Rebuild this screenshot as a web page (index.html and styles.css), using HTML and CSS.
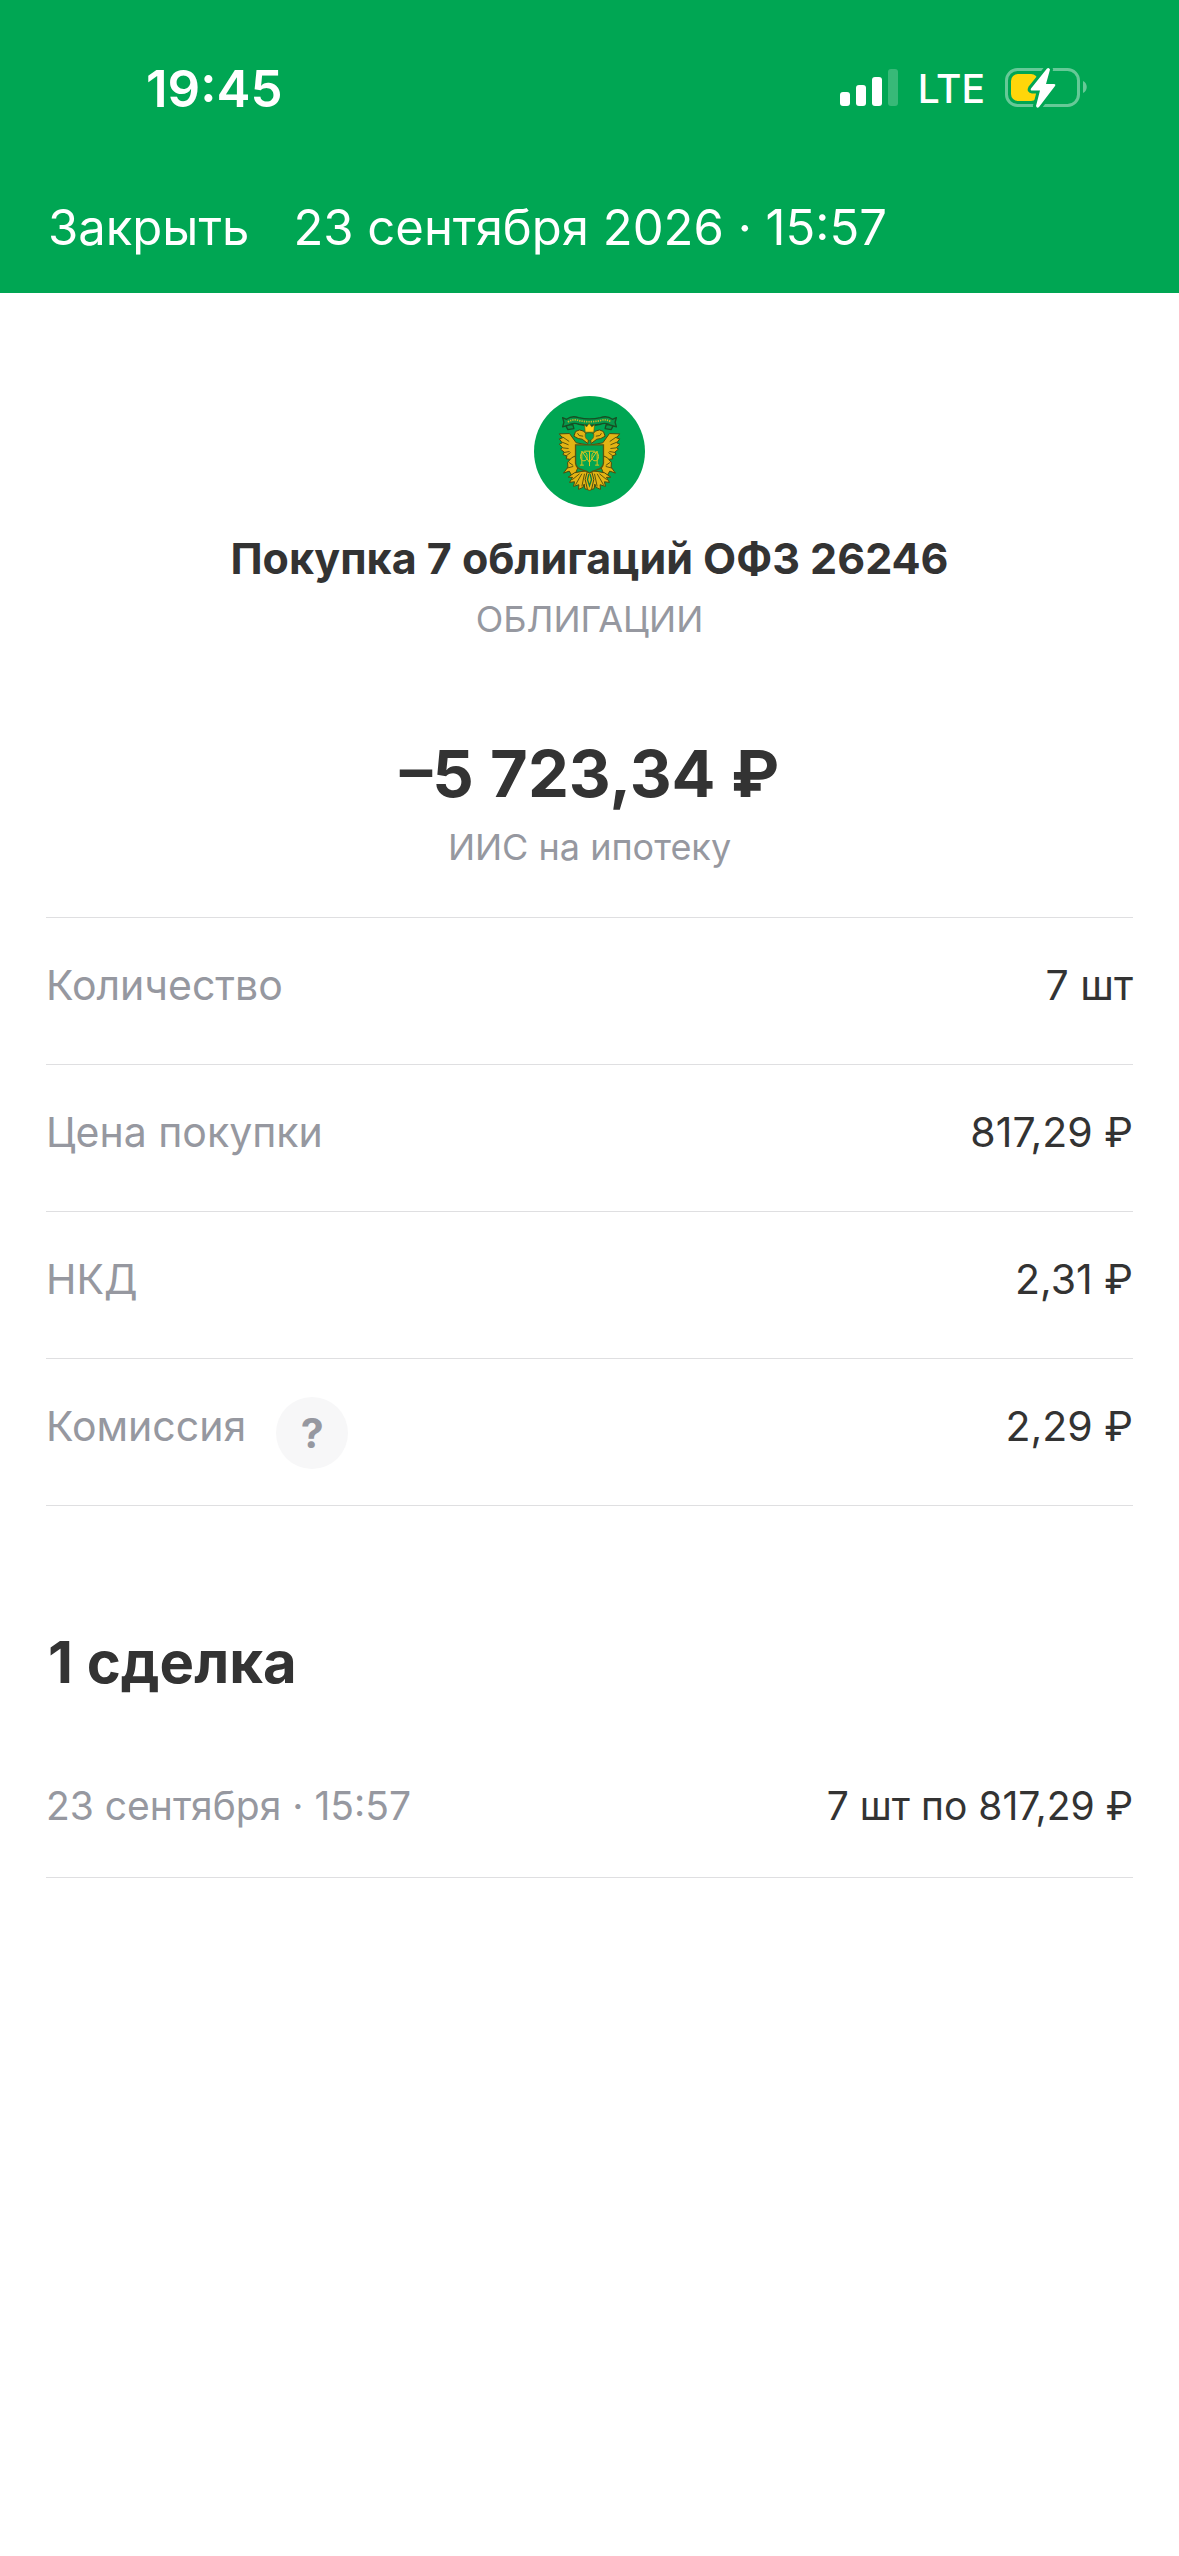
FILE: index.html
```html
<!DOCTYPE html>
<html lang="ru">
<head>
    <meta charset="UTF-8">
    <meta name="viewport" content="width=device-width, initial-scale=1.0">
    <title>Покупка облигаций</title>
    <link rel="stylesheet" href="styles.css">
</head>
<body>

    <header class="header">
        <!-- Status bar -->
        <div class="status">
            <span class="time">19:45</span>
            <div class="indicators">
                <svg class="signal" viewBox="0 0 58 38" aria-hidden="true">
                    <rect x="0" y="23" width="10" height="14" rx="3"/>
                    <rect x="16" y="16" width="10" height="21" rx="3"/>
                    <rect x="32" y="8" width="10" height="29" rx="3"/>
                    <rect x="48" y="0" width="10" height="37" rx="3" opacity="0.22"/>
                </svg>
                <span class="network">LTE</span>
                <svg class="battery" viewBox="0 0 82 42" aria-hidden="true">
                    <rect x="1.5" y="2.5" width="72" height="36" rx="11" fill="none" stroke="#fff" stroke-width="3" opacity="0.4"/>
                    <path d="M78 14c5 2 5 10 0 12z" fill="#fff" opacity="0.4"/>
                    <rect x="6" y="7" width="27" height="27" rx="7" fill="#ffd60a"/>
                    <path d="M42 1.500L26 21.500q-1 2 1 2h8l-4 15.500q1 3 3 1L50 19q1-2-1-2h-8l4-14.500q-1-2.500-3-1z" fill="#fff" stroke="#00a653" stroke-width="6"/>
                    <path d="M42 1.500L26 21.500q-1 2 1 2h8l-4 15.500q1 3 3 1L50 19q1-2-1-2h-8l4-14.500q-1-2.500-3-1z" fill="#fff"/>
                </svg>
            </div>
        </div>
        <!-- Navigation -->
        <nav class="nav">
            <button type="button" class="close">Закрыть</button>
            <span>23 сентября 2026 · 15:57</span>
        </nav>
    </header>

    <main class="content">
        <section class="summary">
            <svg class="emblem" viewBox="43 33 334 334" aria-hidden="true">
                <circle cx="210" cy="200" r="167" fill="#00a653"/>
                <!-- ribbon -->
                <g fill="#07964a" stroke="#174f24" stroke-width="4" stroke-linejoin="round">
                    <path d="M137 120l8 14 18-3-3-12zM283 120l-8 14-18-3 3-12z"/>
                    <path d="M129 98l12 5q16-12 36-5 33 8 66 0 20-7 36 5l12-5-4 14 4 14-17-5q-14-9-32-3-32 7-64 0-18-6-32 3l-17 5 4-14z"/>
                </g>
                <path d="M145 111q17-10 33-4 32 7 64 0 17-6 33 4" fill="none" stroke="#c5b928" stroke-width="5" stroke-dasharray="4 3"/>
                <!-- wings, tail and heads -->
                <g fill="#e3b414" stroke="#4b4a0e" stroke-width="3" stroke-linejoin="round">
                    <g id="half">
                        <path d="M205 180l-35-6-20-28-31 1 10 12-10 3 9 12-9 4 10 10-6 5 11 9-4 7 12 5-2 8 14 2 0 6 12-8 14-18 3-16 22-3z"/>
                        <path d="M205 176l-17-13-12-2-13-7 5-14 12-5 13 4 10 12 4 12z"/>
                        <path d="M166 214l-10 5-12 14 1 14-13 18 17-6 7 12 13-8 7-17-5-19z"/>
                        <path d="M207 258l-20 2-22 4-19 13 13 1-9 15 15-2-3 14 16-5-1 14 13-6 4-10 2 14 11 3z"/>
                    </g>
                    <use href="#half" transform="matrix(-1 0 0 1 420 0)"/>
                </g>
                <g fill="none" stroke="#5b550e" stroke-width="3">
                    <path id="feathers" d="M129 156l20 14M128 172l19 8M129 189l18 2M133 203l17-3M139 214l14-11M147 232l14 10M142 250l19-5M180 267l-22 18M187 267l-19 33M195 267l-8 38M174 145l5 7 12 2"/>
                    <use href="#feathers" transform="matrix(-1 0 0 1 420 0)"/>
                </g>
                <path d="M195 119l6 7 8-11 8 11 8-7-2 23h-26z" fill="#ffce18" stroke="#5b550e" stroke-width="2"/>
                <path d="M197 148q13-10 26 0 1 15-13 20-14-5-13-20z" fill="#00a653" stroke="#5b550e" stroke-width="2"/>
                <path d="M204 258h12l7 26-7 31q-6 4-12 0l-7-31z" fill="#e3b414" stroke="#4b4a0e" stroke-width="3"/>
                <path d="M208 268l-4 17 6 18 6-18-4-17" fill="none" stroke="#08813e" stroke-width="4"/>
                <!-- shield with monogram -->
                <path d="M168 180h84v55q-2 17-20 20-15 3-22 10-7-7-22-10-18-3-20-20z" fill="#00a653" stroke="#5b550e" stroke-width="4"/>
                <g fill="none" stroke="#e0c41b" stroke-width="3">
                    <path d="M187 241v-42l23 34 23-34v42M194 199h32M210 199v45M181 241h12M227 241h12"/>
                    <ellipse cx="193" cy="215" rx="10" ry="13"/>
                    <ellipse cx="227" cy="215" rx="10" ry="13"/>
                </g>
            </svg>
            <h1 class="title">Покупка 7 облигаций ОФЗ 26246</h1>
            <p class="note">ОБЛИГАЦИИ</p>
            <p class="amount">–5&#8197;723,34 ₽</p>
            <p class="note">ИИС на ипотеку</p>
        </section>

        <dl class="details">
            <div class="row">
                <dt>Количество</dt>
                <dd>7 шт</dd>
            </div>
            <div class="row">
                <dt>Цена покупки</dt>
                <dd>817,29 ₽</dd>
            </div>
            <div class="row">
                <dt>НКД</dt>
                <dd>2,31 ₽</dd>
            </div>
            <div class="row">
                <dt>Комиссия</dt>
                <dd class="help-cell"><button type="button" class="help">?</button></dd>
                <dd>2,29 ₽</dd>
            </div>
        </dl>

        <section>
            <h2 class="deals-title">1 сделка</h2>
            <div class="deal">
                <span class="deal-date">23 сентября · 15:57</span>
                <span>7 шт по 817,29 ₽</span>
            </div>
        </section>
    </main>

</body>
</html>
```
FILE: styles.css
```css
body {
    margin: 0;
    background-color: #fff;
    color: #333;
    font-family: Inter, "Noto Sans", sans-serif;
}
h1, h2, p, dl, dd {
    margin: 0;
}
button {
    border: none;
    padding: 0;
    font-family: inherit;
    cursor: pointer;
}

/* Header */
.header {
    background-color: #00a653;
    color: #fff;
    padding: 56px 48px 35px;
}
.status {
    display: flex;
    justify-content: space-between;
    align-items: center;
    height: 64px;
    padding: 0 44px 0 98px;
}
.time {
    font-size: 51px;
    font-weight: 600;
}
.indicators {
    display: flex;
    align-items: center;
    gap: 20px;
}
.signal {
    width: 58px;
    height: 38px;
    fill: #fff;
}
.network {
    font-size: 39px;
    font-weight: 500;
}
.battery {
    width: 82px;
    height: 42px;
}
.nav {
    display: flex;
    gap: 44px;
    margin-top: 78px;
    font-size: 49px;
    line-height: 60px;
    white-space: nowrap;
}
.close {
    background: none;
    color: #fff;
    font-size: 49px;
    line-height: 60px;
}

/* Summary */
.content {
    padding: 103px 46px 0;
}
.summary {
    display: flex;
    flex-direction: column;
    align-items: center;
    text-align: center;
    padding-bottom: 48px;
}
.emblem {
    width: 111px;
    height: 111px;
}
.title {
    margin-top: 26px;
    font-size: 43px;
    font-weight: 700;
    line-height: 50px;
}
.note {
    margin-top: 14px;
    color: #9698a0;
    font-size: 36px;
    line-height: 44px;
}
.amount {
    margin-top: 96px;
    font-size: 65px;
    font-weight: 700;
    line-height: 74px;
}

/* Details */
.row {
    display: flex;
    align-items: flex-start;
    box-sizing: border-box;
    min-height: 147px;
    padding: 38px 0 36px;
    border-top: 1px solid #dfdfe1;
    font-size: 41px;
    line-height: 58px;
}
.row:last-child {
    border-bottom: 1px solid #dfdfe1;
}
.row dt {
    color: #9698a0;
}
.row dd:last-child {
    margin-left: auto;
}
.help-cell {
    margin-left: 30px;
}
.help {
    display: block;
    width: 72px;
    height: 72px;
    border-radius: 50%;
    background-color: #f7f7f8;
    color: #9698a0;
    font-size: 41px;
    font-weight: 700;
}

/* Deals */
.deals-title {
    margin-top: 121px;
    padding-left: 2px;
    font-size: 58px;
    font-weight: 700;
    line-height: 70px;
}
.deal {
    display: flex;
    justify-content: space-between;
    margin-top: 86px;
    padding-bottom: 48px;
    border-bottom: 1px solid #dfdfe1;
    font-size: 39px;
    line-height: 46px;
}
.deal-date {
    color: #9698a0;
}
```
